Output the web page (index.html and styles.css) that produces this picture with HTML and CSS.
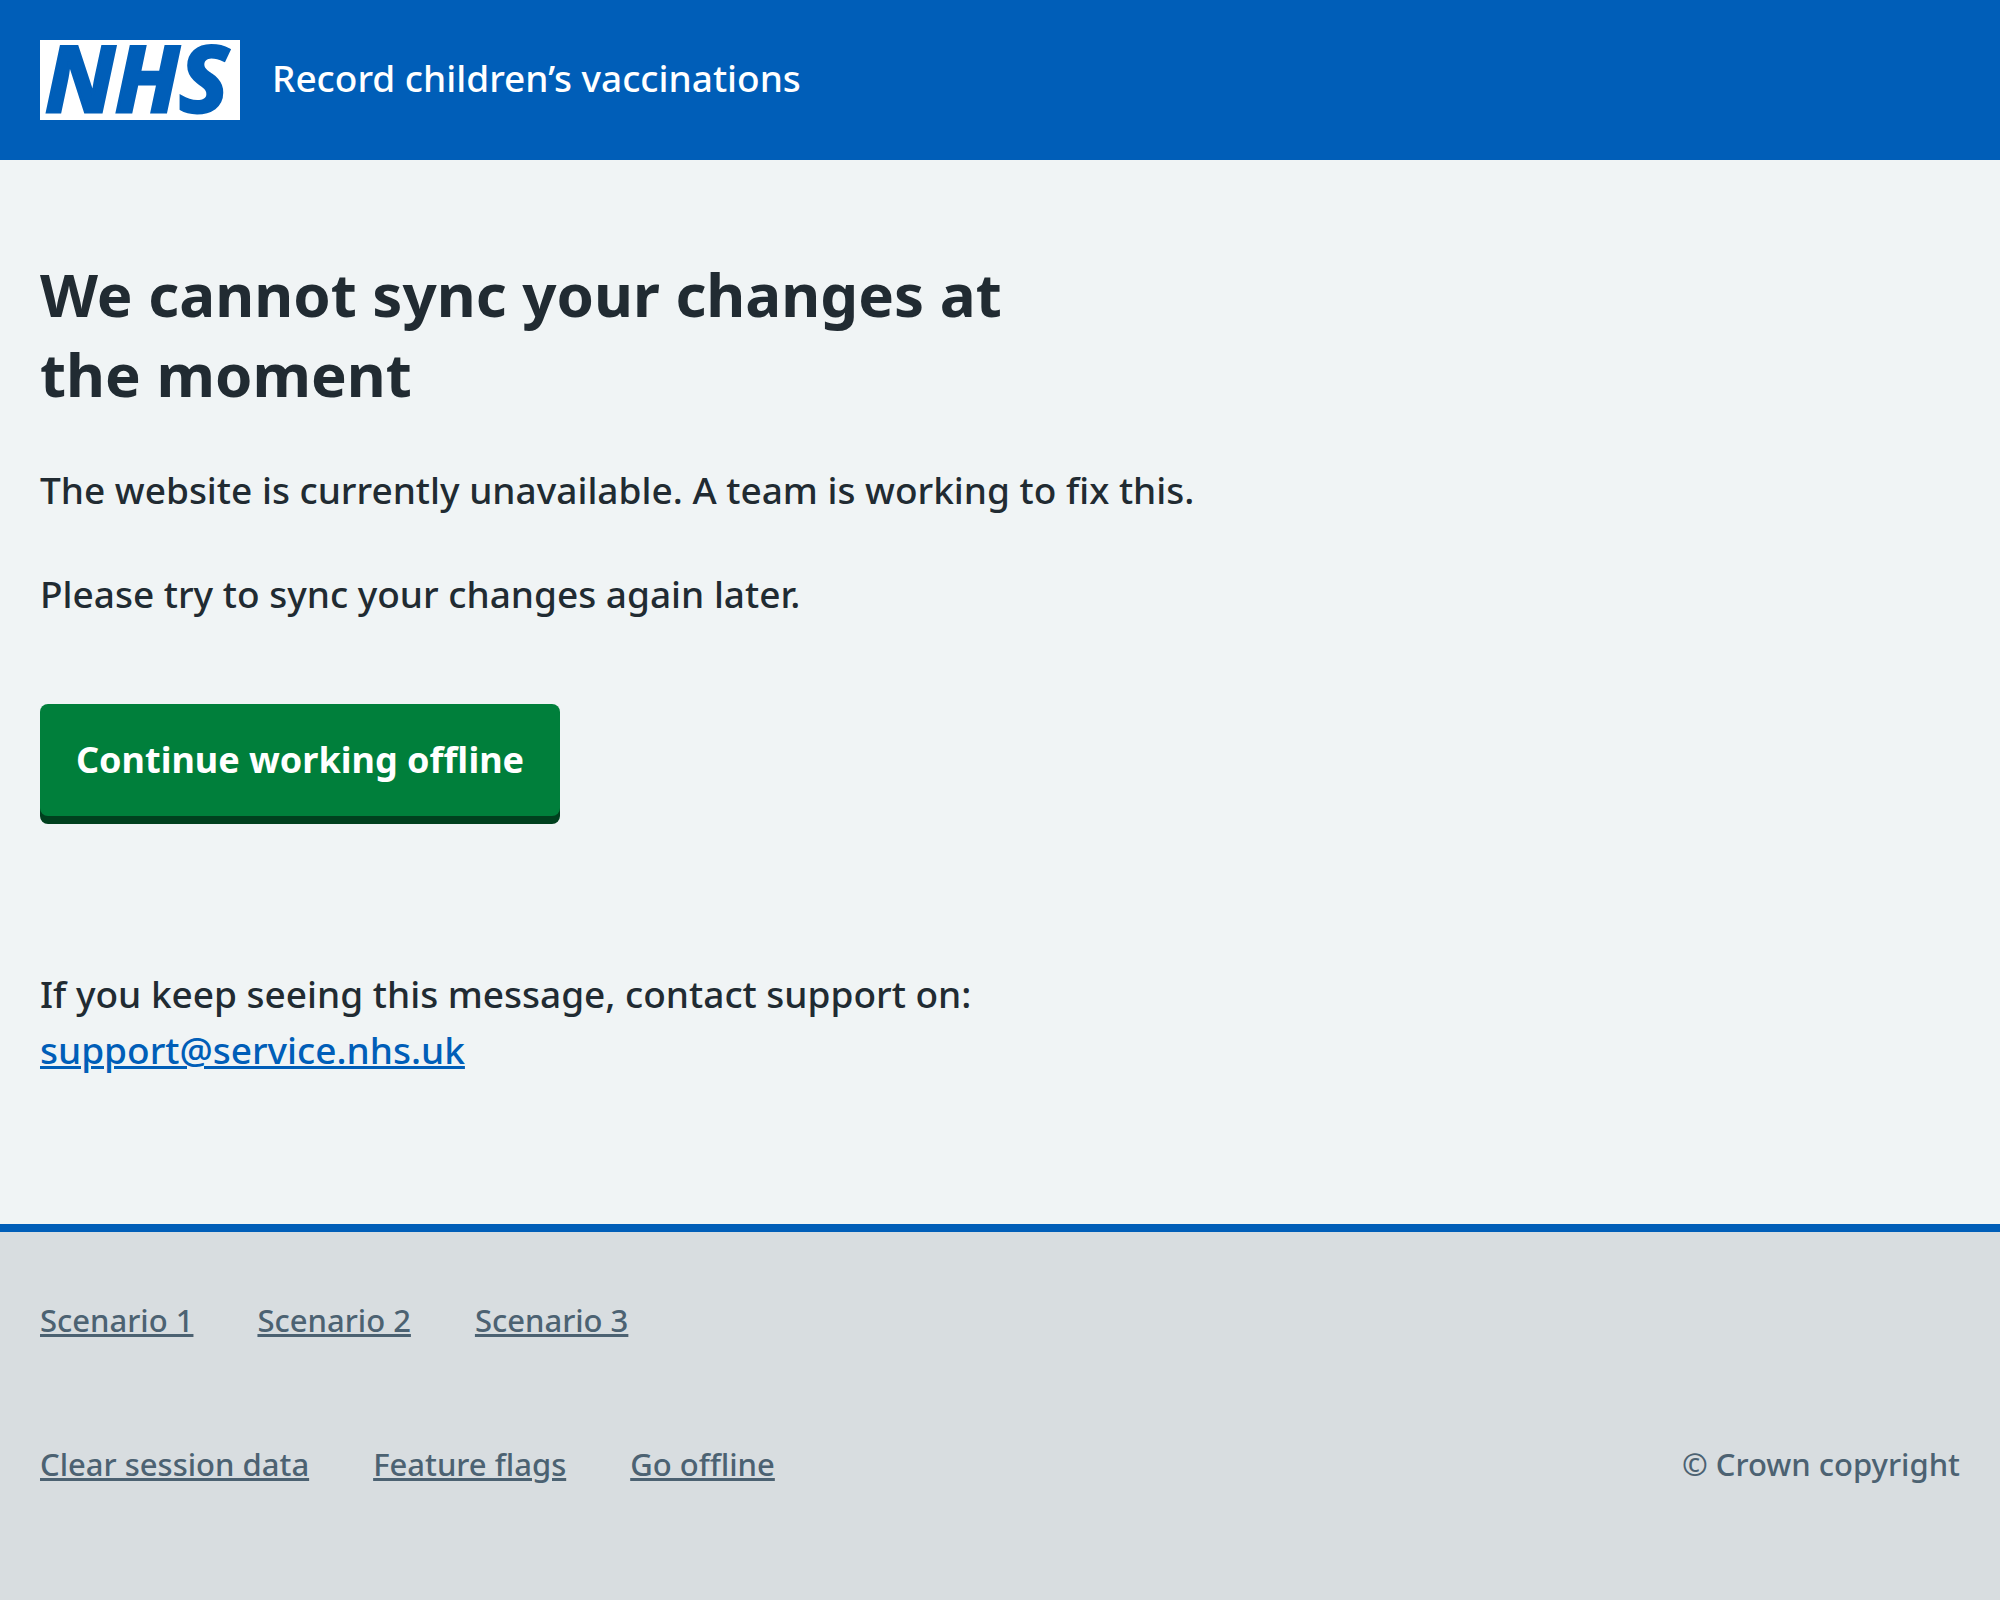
FILE: index.html
```html
<!DOCTYPE html>
<html lang="en">
<head>
<meta charset="utf-8">
<meta name="viewport" content="width=device-width, initial-scale=1">
<title>We cannot sync your changes at the moment</title>
<link rel="stylesheet" href="styles.css">
</head>
<body>
<header class="header">
  <svg class="header-logo" viewBox="0 0 200 80" role="img" aria-label="NHS">
    <rect width="200" height="80" fill="#fff"/>
    <text class="header-logo-text" x="5" y="72">NHS</text>
  </svg>
  <span class="header-service">Record children’s vaccinations</span>
</header>
<main class="main">
  <h1 class="heading">We cannot sync your changes at the moment</h1>
  <p class="text">The website is currently unavailable. A team is working to fix this.</p>
  <p class="text">Please try to sync your changes again later.</p>
  <button class="button" type="button">Continue working offline</button>
  <p class="text">If you keep seeing this message, contact support on:<br>
    <a class="link" href="mailto:support@service.nhs.uk">support@service.nhs.uk</a></p>
</main>
<footer class="footer">
  <ul class="footer-list">
    <li><a class="footer-link" href="#">Scenario 1</a></li>
    <li><a class="footer-link" href="#">Scenario 2</a></li>
    <li><a class="footer-link" href="#">Scenario 3</a></li>
  </ul>
  <div class="footer-row">
    <ul class="footer-list">
      <li><a class="footer-link" href="#">Clear session data</a></li>
      <li><a class="footer-link" href="#">Feature flags</a></li>
      <li><a class="footer-link" href="#">Go offline</a></li>
    </ul>
    <p class="footer-copyright">© Crown copyright</p>
  </div>
</footer>
</body>
</html>
```
FILE: styles.css
```css
* {
  box-sizing: border-box;
}

body {
  display: flex;
  flex-direction: column;
  min-height: 100vh;
  margin: 0;
  background: #f0f4f5;
  color: #212b32;
  font-family: "Noto Sans", "Open Sans", sans-serif;
  font-size: 37px;
  font-weight: 500;
  line-height: 56px;
}

.header {
  display: flex;
  align-items: center;
  gap: 32px;
  padding: 40px;
  background: #005eb8;
  color: #fff;
}

.header-logo {
  flex: none;
  width: 200px;
  height: 80px;
  overflow: visible;
}

.header-logo-text {
  fill: #005eb8;
  stroke: #005eb8;
  stroke-width: 3px;
  font-family: "Noto Sans", "Open Sans", sans-serif;
  font-size: 92px;
  font-style: italic;
  font-weight: 700;
}

.header-service {
  padding-bottom: 4px;
}

.main {
  padding: 94px 40px 146px;
}

.heading {
  max-width: 1060px;
  margin: 0 0 48px;
  font-size: 60px;
  font-weight: 700;
  line-height: 80px;
}

.text {
  margin: 0 0 48px;
}

.text:last-child {
  margin-bottom: 0;
}

.button {
  display: block;
  margin: 82px 0 150px;
  padding: 28px 36px;
  border: 0;
  border-radius: 8px;
  background: #007f3b;
  box-shadow: 0 8px 0 #00401e;
  color: #fff;
  font: inherit;
  font-size: 36px;
  font-weight: 700;
}

.link {
  color: #005eb8;
  text-decoration-thickness: 3px;
}

.footer {
  flex: 1;
  padding: 64px 40px;
  border-top: 8px solid #005eb8;
  background: #d8dde0;
  color: #4c6272;
  font-size: 31px;
  line-height: 48px;
}

.footer-list {
  display: flex;
  flex-wrap: wrap;
  gap: 16px 64px;
  margin: 0;
  padding: 0;
  list-style: none;
}

.footer-row {
  display: flex;
  flex-wrap: wrap;
  justify-content: space-between;
  gap: 16px 64px;
  margin-top: 96px;
}

.footer-link {
  color: inherit;
  text-decoration-thickness: 3px;
}

.footer-copyright {
  margin: 0;
}
```
